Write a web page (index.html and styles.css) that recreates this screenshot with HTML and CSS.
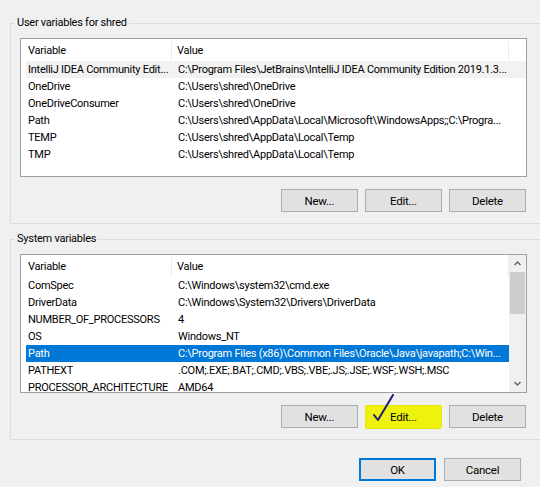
FILE: index.html
```html
<!DOCTYPE html>
<html lang="en">
<head>
  <meta charset="UTF-8">
  <meta name="viewport" content="width=device-width,initial-scale=1.0">
  <title>Environment Variables</title>
  <link rel="stylesheet" href="styles.css">
</head>
<body>
  <div class="dialog">
    <fieldset class="group">
      <legend>User variables for shred</legend>
      <div class="group-body">
        <div class="listbox">
          <div class="cols">
            <div class="head"><span>Variable</span><span>Value</span></div>
            <div class="row hover"><span>IntelliJ IDEA Community Edit...</span><span>C:\Program Files\JetBrains\IntelliJ IDEA Community Edition 2019.1.3...</span></div>
            <div class="row"><span>OneDrive</span><span>C:\Users\shred\OneDrive</span></div>
            <div class="row"><span>OneDriveConsumer</span><span>C:\Users\shred\OneDrive</span></div>
            <div class="row"><span>Path</span><span>C:\Users\shred\AppData\Local\Microsoft\WindowsApps;;C:\Progra...</span></div>
            <div class="row"><span>TEMP</span><span>C:\Users\shred\AppData\Local\Temp</span></div>
            <div class="row"><span>TMP</span><span>C:\Users\shred\AppData\Local\Temp</span></div>
          </div>
        </div>
        <div class="buttons">
          <button>New...</button>
          <button>Edit...</button>
          <button>Delete</button>
        </div>
      </div>
    </fieldset>

    <fieldset class="group second">
      <legend>System variables</legend>
      <div class="group-body">
        <div class="listbox">
          <div class="cols">
            <div class="head"><span>Variable</span><span>Value</span></div>
            <div class="row"><span>ComSpec</span><span>C:\Windows\system32\cmd.exe</span></div>
            <div class="row"><span>DriverData</span><span>C:\Windows\System32\Drivers\DriverData</span></div>
            <div class="row"><span>NUMBER_OF_PROCESSORS</span><span>4</span></div>
            <div class="row"><span>OS</span><span>Windows_NT</span></div>
            <div class="row selected"><span>Path</span><span>C:\Program Files (x86)\Common Files\Oracle\Java\javapath;C:\Win...</span></div>
            <div class="row"><span>PATHEXT</span><span>.COM;.EXE;.BAT;.CMD;.VBS;.VBE;.JS;.JSE;.WSF;.WSH;.MSC</span></div>
            <div class="row"><span>PROCESSOR_ARCHITECTURE</span><span>AMD64</span></div>
          </div>
          <div class="scrollbar">
            <div class="arrow">
              <svg width="17" height="17" viewBox="0 0 17 17"><polyline points="5.5,10 8.5,7 11.5,10" fill="none" stroke="#606060" stroke-width="1.4"/></svg>
            </div>
            <div class="thumb"></div>
            <div class="track"></div>
            <div class="arrow">
              <svg width="17" height="17" viewBox="0 0 17 17"><polyline points="5.5,7 8.5,10 11.5,7" fill="none" stroke="#606060" stroke-width="1.4"/></svg>
            </div>
          </div>
        </div>
        <div class="buttons">
          <button>New...</button>
          <button class="marked">Edit...
            <svg class="pen" width="30" height="30" viewBox="0 0 30 30"><polyline points="3,21 7,26 22,1" fill="none" stroke="#1c1a78" stroke-width="2" stroke-linecap="round" stroke-linejoin="round"/></svg>
          </button>
          <button>Delete</button>
        </div>
      </div>
    </fieldset>

    <div class="footer">
      <button class="default">OK</button>
      <button>Cancel</button>
    </div>
  </div>
</body>
</html>
```

FILE: styles.css
```css
body {
  margin: 0;
  background: #f0f0f0;
  font-family: Roboto, "Noto Sans", sans-serif;
  font-size: 11px;
  letter-spacing: -0.25px;
  color: #000;
  overflow: hidden;
}
.dialog {
  padding: 15px 0 0 10px;
  width: 560px;
}
.group {
  margin: 0;
  padding: 0;
  min-width: 0;
  border: 1px solid #dcdcdc;
  width: 540px;
  box-sizing: border-box;
}
.group.second {
  margin-top: 7px;
}
.group legend {
  margin-left: 4px;
  padding: 0 2px;
  line-height: 16px;
  font-size: 11px;
}
.group-body {
  padding: 7px 9px 11px 9px;
}
.second .group-body {
  padding-bottom: 10px;
}
.listbox {
  width: 507px;
  height: 139px;
  box-sizing: border-box;
  border: 1px solid #a0a0a0;
  background: #fff;
  display: flex;
  overflow: hidden;
}
.cols {
  flex: 1;
  min-width: 0;
}
.head {
  display: grid;
  grid-template-columns: 151px 337px;
  height: 22px;
}
.head span {
  padding-left: 7px;
  border-right: 1px solid #ececec;
  margin: 2px 0 1px;
  line-height: 20px;
}
.head span + span {
  padding-left: 5px;
}
.row {
  display: grid;
  grid-template-columns: 146px 337px;
  margin-left: 5px;
  height: 17px;
  line-height: 17px;
  white-space: nowrap;
}
.row span {
  overflow: hidden;
  padding-left: 2px;
}
.row span + span {
  padding-left: 6px;
}
.row.hover {
  background: #f2f2f2;
}
.row.selected {
  background: #0078d7;
  color: #fff;
}
.scrollbar {
  width: 17px;
  background: #f0f0f0;
  display: flex;
  flex-direction: column;
}
.arrow {
  height: 17px;
}
.arrow svg {
  display: block;
}
.thumb {
  height: 42px;
  margin: 0 1px;
  background: #cdcdcd;
}
.track {
  flex: 1;
}
.buttons {
  width: 507px;
  box-sizing: border-box;
  padding-right: 1px;
  margin-top: 12px;
  display: flex;
  justify-content: flex-end;
  gap: 7px;
}
button {
  width: 77px;
  height: 23px;
  padding: 0;
  background: #e1e1e1;
  border: 1px solid #adadad;
  font-family: inherit;
  font-size: 11.5px;
  letter-spacing: inherit;
  color: #000;
}
button.marked {
  position: relative;
  background: #eef20c;
  border-color: #e4e80c;
  height: 24px;
  border-radius: 0 0 3px 2px;
}
.pen {
  position: absolute;
  left: 5px;
  top: -12px;
}
.footer {
  margin-top: 18px;
  width: 511px;
  display: flex;
  justify-content: flex-end;
  gap: 8px;
}
button.default {
  border-color: #0078d7;
  box-shadow: inset 0 0 0 1px #0078d7;
}
```
